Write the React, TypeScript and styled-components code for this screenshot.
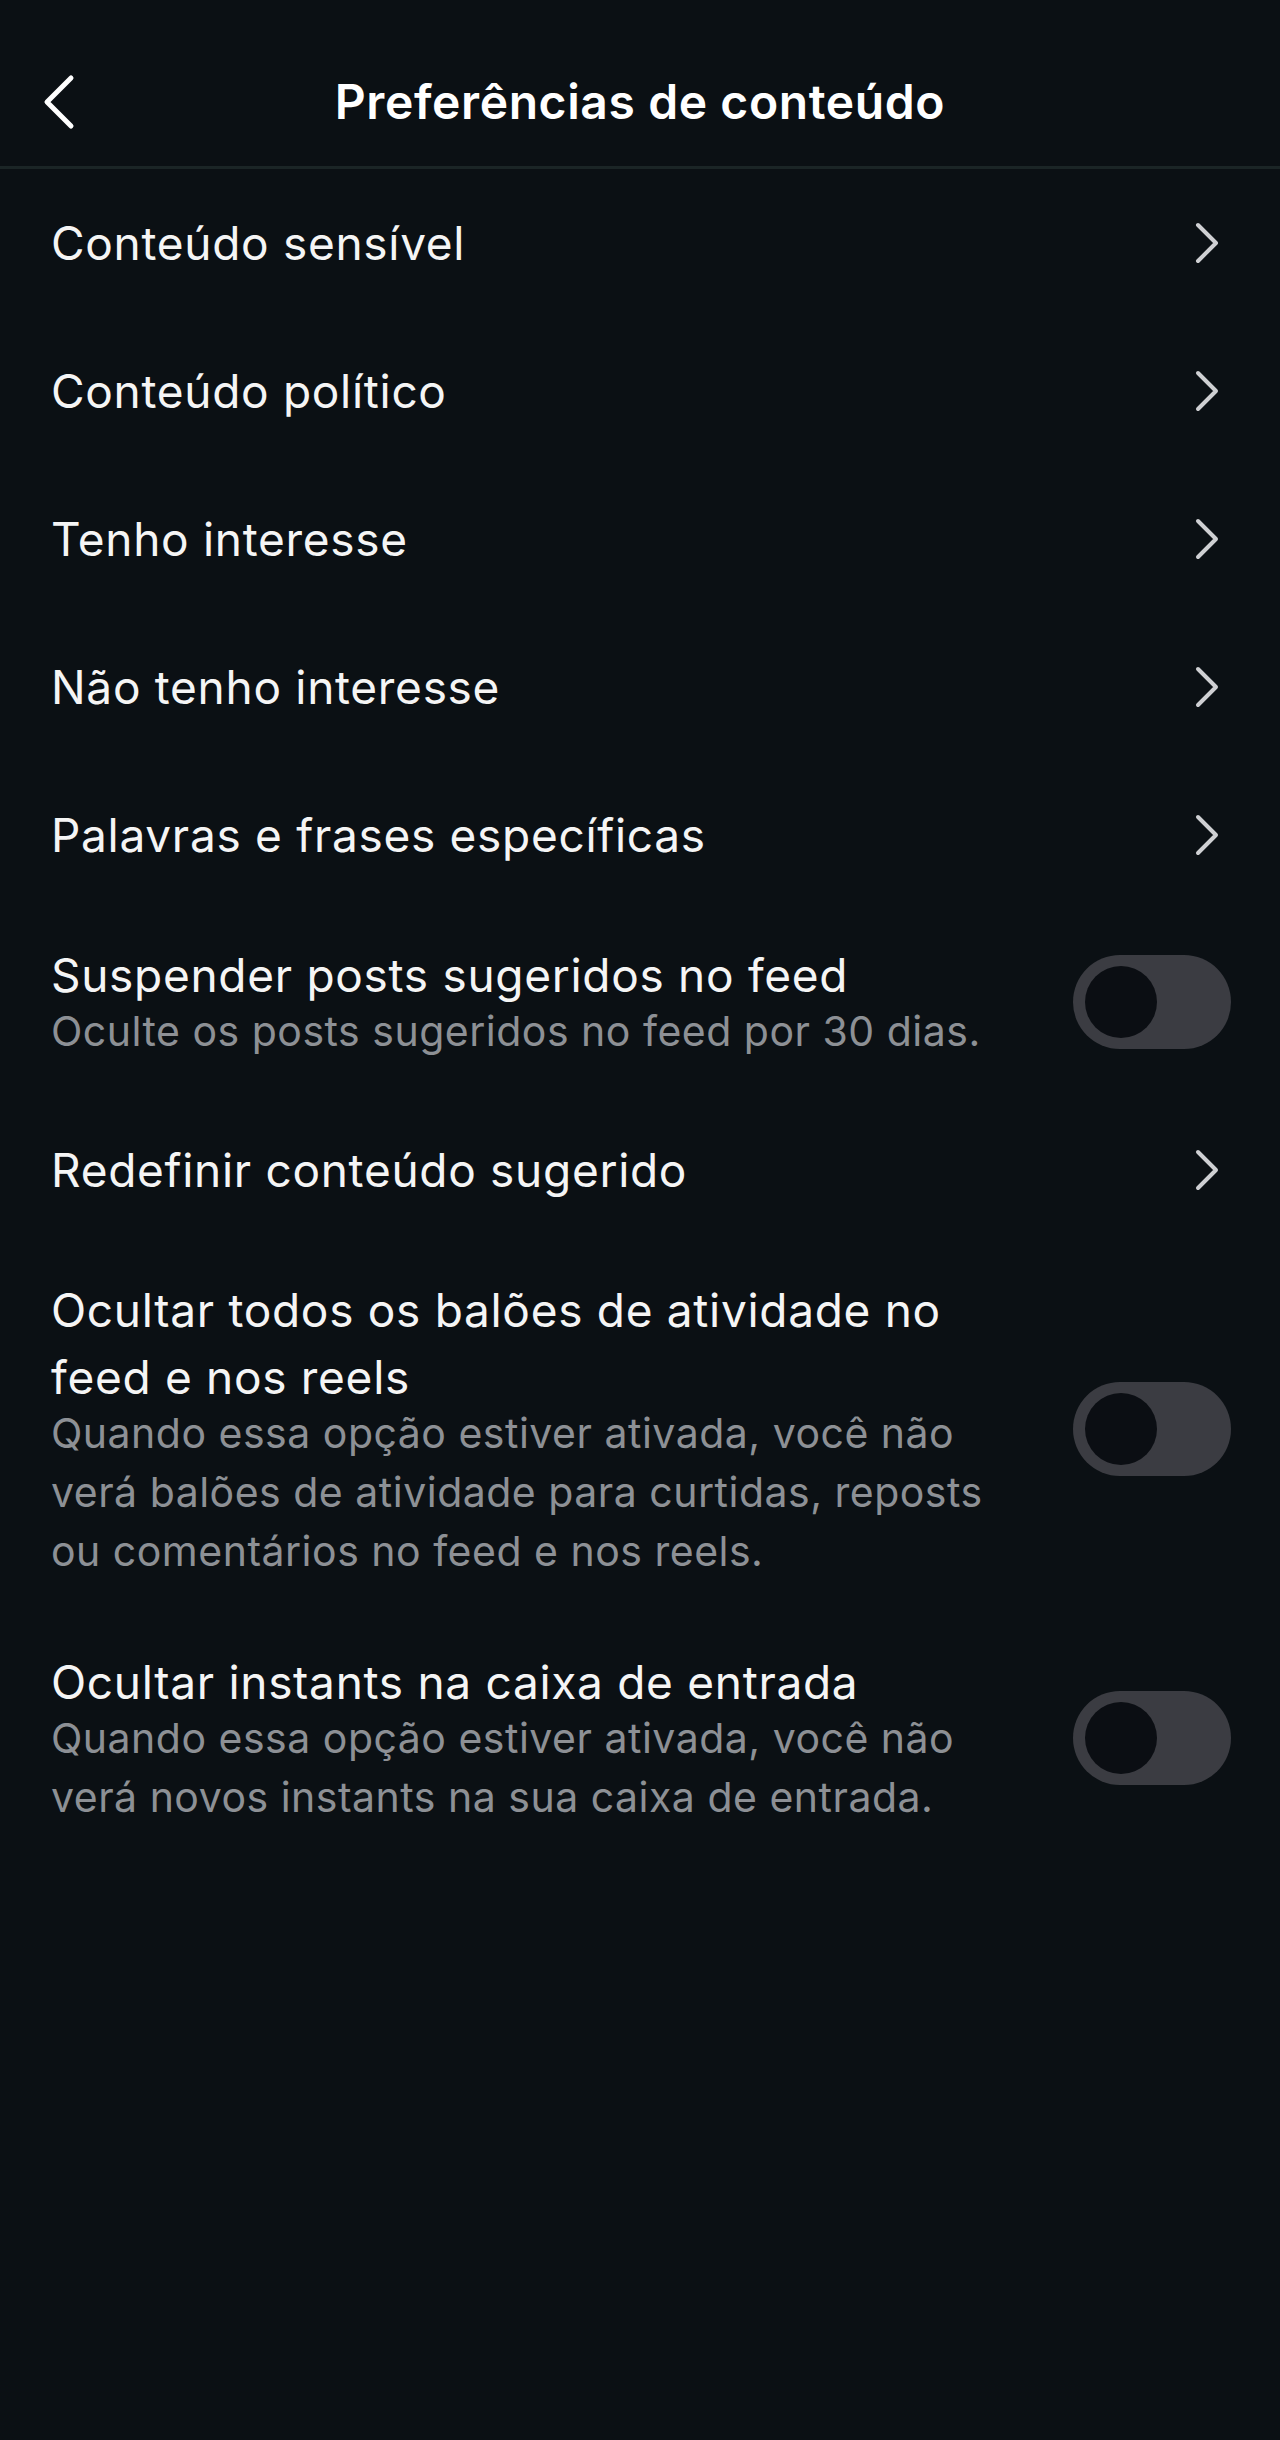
import React from "react"
import styled, { createGlobalStyle } from "styled-components"

const GlobalStyle = createGlobalStyle`
  html, body {
    margin: 0;
    padding: 0;
    background: #0b1014;
  }
  body {
    font-family: Inter, "Noto Sans", "Liberation Sans", sans-serif;
    -webkit-font-smoothing: antialiased;
  }
`

type Item =
  | { kind: "link"; title: string }
  | { kind: "toggle"; title: string; desc: string }

const items: Item[] = [
  { kind: "link", title: "Conteúdo sensível" },
  { kind: "link", title: "Conteúdo político" },
  { kind: "link", title: "Tenho interesse" },
  { kind: "link", title: "Não tenho interesse" },
  { kind: "link", title: "Palavras e frases específicas" },
  {
    kind: "toggle",
    title: "Suspender posts sugeridos no feed",
    desc: "Oculte os posts sugeridos no feed por 30 dias.",
  },
  { kind: "link", title: "Redefinir conteúdo sugerido" },
  {
    kind: "toggle",
    title: "Ocultar todos os balões de atividade no feed e nos reels",
    desc: "Quando essa opção estiver ativada, você não verá balões de atividade para curtidas, reposts ou comentários no feed e nos reels.",
  },
  {
    kind: "toggle",
    title: "Ocultar instants na caixa de entrada",
    desc: "Quando essa opção estiver ativada, você não verá novos instants na sua caixa de entrada.",
  },
]

const BackIcon = () => (
  <svg width="36" height="56" viewBox="0 0 36 56" fill="none">
    <polyline
      points="31,4 7,28 31,52"
      stroke="#ffffff"
      strokeWidth="5"
      strokeLinecap="round"
      strokeLinejoin="round"
    />
  </svg>
)

const ChevronIcon = () => (
  <svg width="26" height="44" viewBox="0 0 26 44" fill="none">
    <polyline
      points="4,4 22,22 4,40"
      stroke="#cfd0d3"
      strokeWidth="4"
      strokeLinecap="round"
      strokeLinejoin="round"
    />
  </svg>
)

const App = () => {
  return (
    <Page>
      <GlobalStyle />
      <Header>
        <BackButton>
          <BackIcon />
        </BackButton>
        <Title>Preferências de conteúdo</Title>
      </Header>
      <List>
        {items.map(item =>
          item.kind === "link" ? (
            <LinkRow key={item.title}>
              <RowTitle>{item.title}</RowTitle>
              <ChevronBox>
                <ChevronIcon />
              </ChevronBox>
            </LinkRow>
          ) : (
            <ToggleRow key={item.title}>
              <TextCol>
                <RowTitle>{item.title}</RowTitle>
                <RowDesc>{item.desc}</RowDesc>
              </TextCol>
              <Switch>
                <Knob />
              </Switch>
            </ToggleRow>
          )
        )}
      </List>
    </Page>
  )
}

export default App

const Page = styled.div`
  width: 1280px;
  min-height: 2440px;
  background: #0b1014;
  color: #f5f5f5;
`
const Header = styled.header`
  position: relative;
  height: 166px;
  display: flex;
  align-items: center;
  justify-content: center;
  border-bottom: 3px solid #1b2526;
`
const BackButton = styled.div`
  position: absolute;
  left: 40px;
  top: 74px;
  display: flex;
`
const Title = styled.h1`
  margin: 0;
  margin-top: 36px;
  font-size: 48px;
  font-weight: 600;
  color: #ffffff;
  letter-spacing: 0.6px;
`
const List = styled.div`
  display: flex;
  flex-direction: column;
`
const LinkRow = styled.div`
  height: 148px;
  display: flex;
  align-items: center;
  justify-content: space-between;
  padding: 0 60px 0 51px;
`
const ToggleRow = styled.div`
  display: flex;
  align-items: center;
  justify-content: space-between;
  padding: 33px 49px 35px 51px;
`
const TextCol = styled.div`
  width: 975px;
  display: flex;
  flex-direction: column;
`
const RowTitle = styled.div`
  font-size: 46px;
  line-height: 67px;
  font-weight: 400;
  color: #f5f5f5;
  letter-spacing: 0.7px;
`
const RowDesc = styled.div`
  margin-top: -7px;
  font-size: 41px;
  line-height: 59px;
  color: #8d9095;
  letter-spacing: 0.5px;
`
const ChevronBox = styled.div`
  display: flex;
`
const Switch = styled.div`
  width: 158px;
  height: 94px;
  border-radius: 47px;
  background: #3b3c42;
  display: flex;
  align-items: center;
  padding-left: 12px;
  box-sizing: border-box;
  flex-shrink: 0;
`
const Knob = styled.div`
  width: 72px;
  height: 72px;
  border-radius: 50%;
  background: #0b0e13;
`
